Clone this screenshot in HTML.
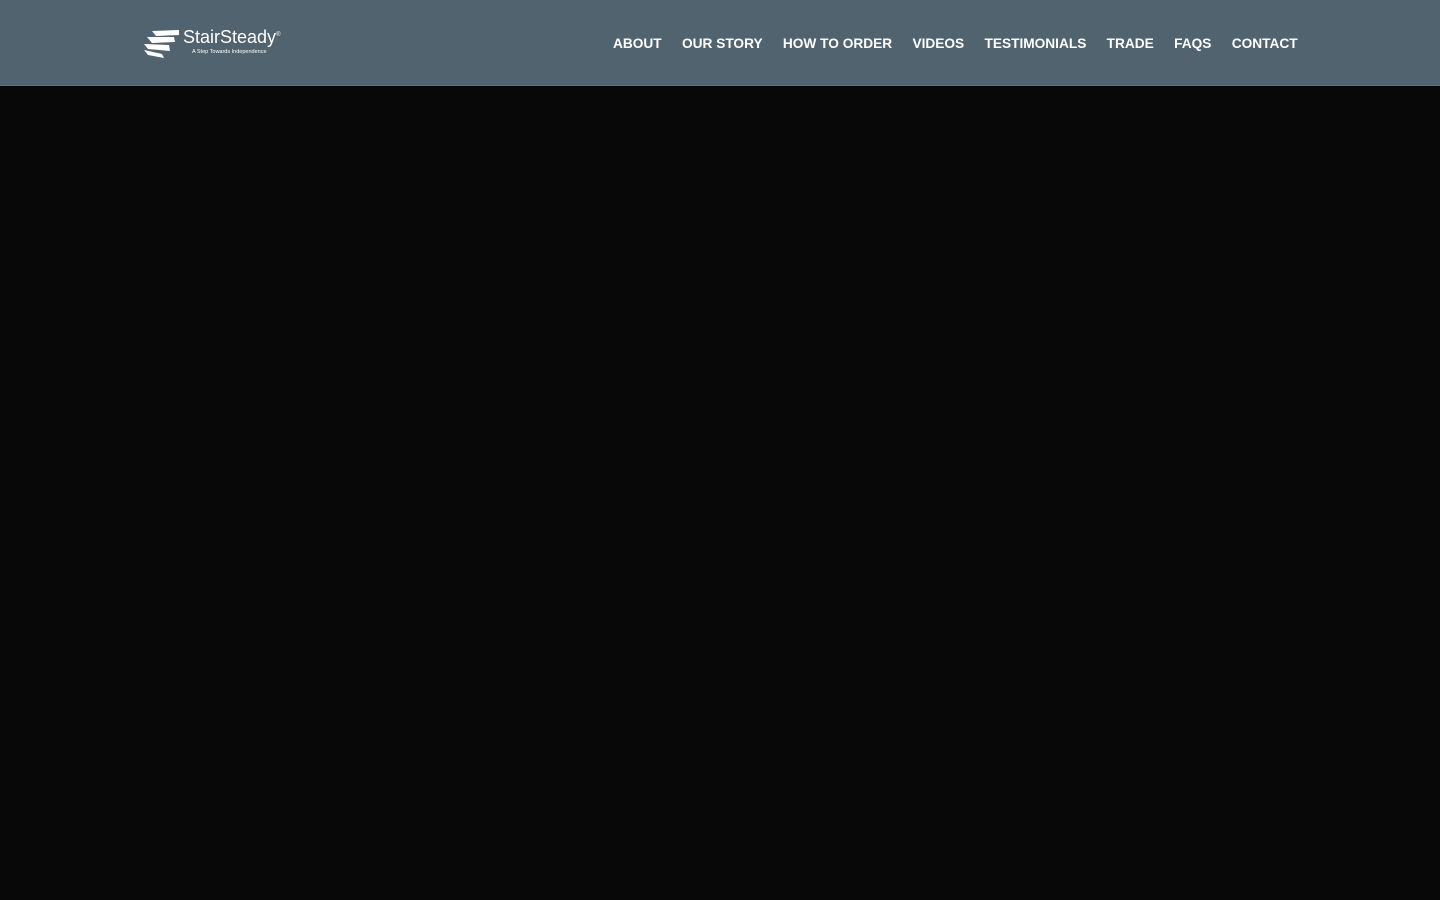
<!DOCTYPE html>
<html><head><meta charset="utf-8"><style>
*{margin:0;padding:0;box-sizing:border-box}
body{width:1440px;height:900px;background:#080808;overflow:hidden;font-family:"Liberation Sans",Arial,sans-serif}
.hdr{position:absolute;left:0;top:0;width:1440px;height:86px;background:#50636e;border-bottom:1px solid #5e6f78}
.nav{position:absolute;top:36px;left:613px;display:flex;color:#fff;font-weight:bold;font-size:13.7px;white-space:nowrap}
.nav span{margin-right:20.3px}
.logo{position:absolute;left:144px;top:28px}
.brand{position:absolute;left:183px;top:27px;color:#fff;font-size:18px;font-weight:300;letter-spacing:0px}
.tag{position:absolute;left:192px;top:49px;color:#fff;font-size:5.5px}
</style></head><body>
<div class="hdr">
<svg class="logo" width="38" height="32" viewBox="0 0 38 32">
<polygon points="8,3 35,2 35,7 12,8" fill="#fff"/>
<polygon points="3,9 30,9 31,14 8,15" fill="#fff"/>
<polygon points="0,16 25,17 26,23 4,21" fill="#fff"/>
<polygon points="0,22 18,26 20,30 4,27" fill="#fff"/>
</svg>
<div class="brand">StairSteady<sup style="font-size:6px">®</sup></div>
<div class="tag">A Step Towards Independence</div>
<div class="nav"><span>ABOUT</span><span>OUR STORY</span><span>HOW TO ORDER</span><span>VIDEOS</span><span>TESTIMONIALS</span><span>TRADE</span><span>FAQS</span><span style="margin:0">CONTACT</span></div>
</div>
</body></html>
